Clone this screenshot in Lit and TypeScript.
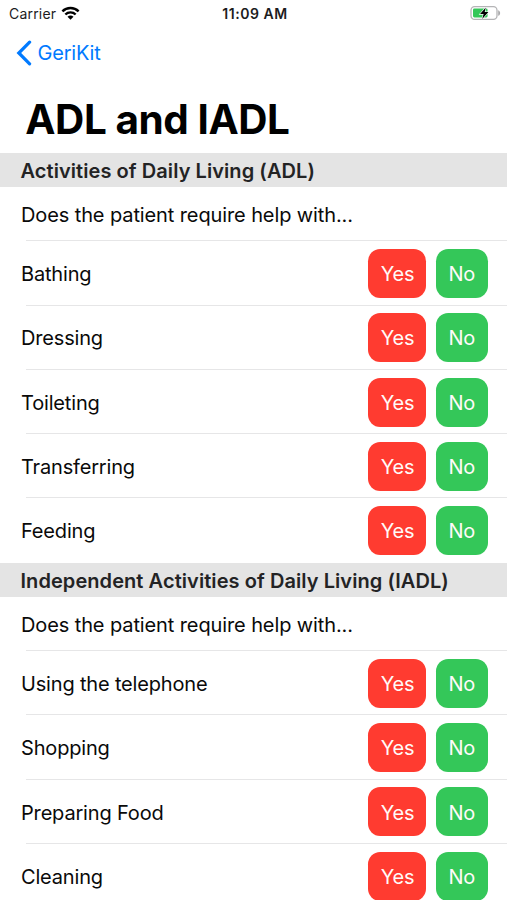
import { LitElement, html, css } from "lit";
import { customElement, property } from "lit/decorators.js";

@customElement("status-bar")
class StatusBar extends LitElement {
  static styles = css`
    :host {
      display: grid;
      grid-template-columns: 1fr auto 1fr;
      align-items: center;
      height: 27px;
      padding: 0 6px 0 9px;
      font-size: 14px;
      line-height: 27px;
      color: #1c1c1e;
    }
    .carrier { display: flex; align-items: center; gap: 5px; letter-spacing: 0.2px; }
    .time { font-weight: 600; letter-spacing: 0.55px; }
    .battery { justify-self: end; margin-top: -1px; }
    .wifi { margin-top: -2px; }
    svg { display: block; }
  `;
  render() {
    return html`
      <div class="carrier">
        <span>Carrier</span>
        <svg class="wifi" width="19" height="14" viewBox="0 0 20 15" fill="none" stroke="#000" stroke-width="2.6">
          <path d="M1.3 5.7a12.4 12.4 0 0 1 17.4 0" />
          <path d="M4.5 9.1a7.8 7.8 0 0 1 11 0" />
          <path d="M10 14.8 6.8 11.5a4.5 4.5 0 0 1 6.4 0z" fill="#000" stroke="none" />
        </svg>
      </div>
      <div class="time">11:09 AM</div>
      <svg class="battery" width="31" height="16" viewBox="0 0 31 16">
        <rect x="1" y="1.6" width="26" height="12.8" rx="3.6" fill="#fff" stroke="#b4b4b6" stroke-width="1.3" />
        <path d="M28.2 5.2c2.6.9 2.6 4.7 0 5.6z" fill="#a9a9ab" />
        <rect x="3" y="3.6" width="14.6" height="8.8" rx="1.4" fill="#34c759" />
        <path d="M15.8 2.4 10 9.1h3.6l-1.4 4.8L18.4 7h-3.7z" fill="#000" stroke="#fff" stroke-width="1.2" paint-order="stroke" />
      </svg>
    `;
  }
}

@customElement("question-row")
class QuestionRow extends LitElement {
  @property() label = "";
  static styles = css`
    :host { display: block; }
    .row {
      display: flex;
      align-items: center;
      box-sizing: border-box;
      height: 64.3px;
      padding: 0 19.5px 0 21px;
    }
    .label { flex: 1; padding-top: 1.4px; }
    .answer {
      display: flex;
      align-items: center;
      justify-content: center;
      box-sizing: border-box;
      height: 49px;
      border: 0;
      border-radius: 12.2px;
      padding: 1.4px 0 0;
      font: inherit;
      letter-spacing: inherit;
      color: #fffaf8;
    }
    .yes { width: 58px; margin-right: 10px; padding-left: 1px; background: #ff3b30; }
    .no { width: 51.5px; background: #34c759; }
  `;
  render() {
    return html`<div class="row">
      <span class="label">${this.label}</span>
      <button class="answer yes">Yes</button>
      <button class="answer no">No</button>
    </div>`;
  }
}

@customElement("app-root")
class AppRoot extends LitElement {
  private sections = [
    {
      title: "Activities of Daily Living (ADL)",
      items: ["Bathing", "Dressing", "Toileting", "Transferring", "Feeding"],
    },
    {
      title: "Independent Activities of Daily Living (IADL)",
      items: ["Using the telephone", "Shopping", "Preparing Food", "Cleaning"],
    },
  ];
  static styles = css`
    :host {
      display: block;
      height: 900px;
      overflow: hidden;
      background: #fff;
      color: #0a0a0a;
      font-family: Inter, "Liberation Sans", sans-serif;
      font-size: 20px;
      letter-spacing: -0.17px;
    }
    .nav {
      display: flex;
      align-items: center;
      gap: 5.5px;
      height: 51px;
      padding-left: 16px;
      color: #007aff;
      letter-spacing: -0.2px;
    }
    .nav svg { display: block; }
    h1 {
      margin: 0;
      padding-left: 25.3px;
      height: 75px;
      line-height: 84px;
      font-size: 40.5px;
      font-weight: 700;
      letter-spacing: -0.45px;
      color: #000;
    }
    h2 {
      margin: 0;
      padding-left: 20.5px;
      height: 34.3px;
      line-height: 36.5px;
      font-size: 20px;
      font-weight: 600;
      letter-spacing: 0.07px;
      color: #232324;
      background: #e4e4e4;
    }
    .prompt { height: 54px; line-height: 56.6px; padding-left: 21px; letter-spacing: -0.11px; }
    .line { height: 1px; margin: -1px 0 0 26px; background: #e6e6e7; }
  `;
  render() {
    return html`
      <status-bar></status-bar>
      <div class="nav">
        <svg width="16" height="26" viewBox="0 0 16 26" fill="none" stroke="#007aff" stroke-width="3.2" stroke-linecap="round" stroke-linejoin="miter">
          <path d="M13.6 2.2 2.8 13l10.8 10.8" />
        </svg>
        <span>GeriKit</span>
      </div>
      <h1>ADL and IADL</h1>
      ${this.sections.map(
        (s) => html`
          <h2>${s.title}</h2>
          <div class="prompt">Does the patient require help with...</div>
          ${s.items.map((i) => html`<div class="line"></div><question-row label=${i}></question-row>`)}
        `
      )}
    `;
  }
}
